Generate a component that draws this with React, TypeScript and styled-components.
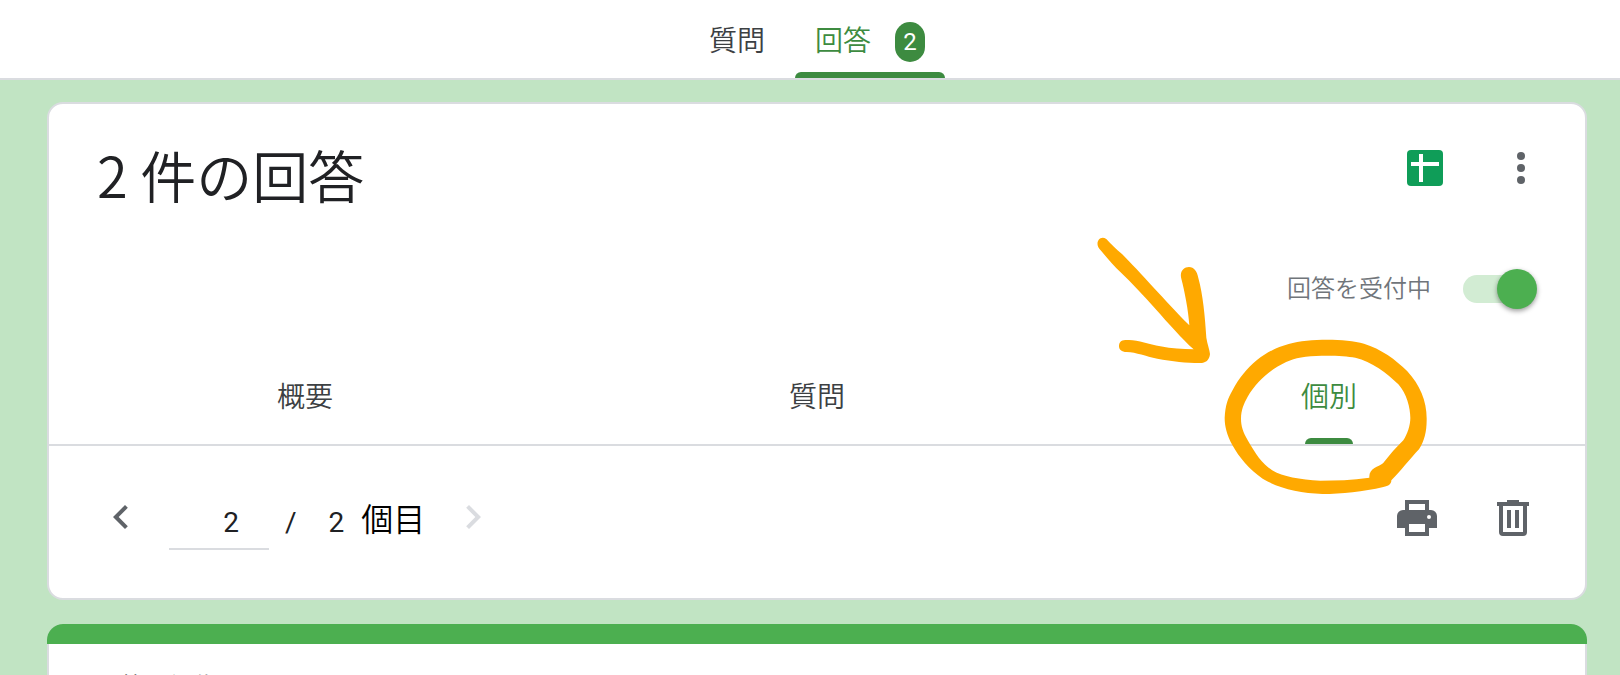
import React, { useState } from "react";
import styled, { createGlobalStyle } from "styled-components";

const GlobalStyle = createGlobalStyle`
  *, *::before, *::after { box-sizing: border-box; }
  body {
    margin: 0;
    background: #c1e4c3;
    color: #202124;
    font-family: Roboto, "Noto Sans CJK JP DemiLight", "Noto Sans CJK JP", sans-serif;
    font-size: 28px;
    font-weight: 350;
    line-height: 40px;
  }
  html { height: 100%; overflow: hidden; }
  button, input { font: inherit; color: inherit; }
  button { border: 0; padding: 0; background: none; cursor: pointer; }
`;

const TopBar = styled.header`
  display: flex;
  justify-content: center;
  gap: 10px;
  height: 80px;
  padding-left: 14px;
  background: #fff;
  border-bottom: 2px solid #dadce0;
`;

const TopTab = styled.button<{ $active?: boolean }>`
  display: flex;
  flex-direction: column;
  height: 78px;
  padding-top: 22px;
  color: ${(p) => (p.$active ? "#3d8b40" : "#3c4043")};
`;

const TopTabBody = styled.span`
  display: flex;
  align-items: center;
  gap: 24px;
  height: 50px;
  padding: 0 20px 10px;
`;

const Indicator = styled.span<{ $width: string }>`
  width: ${(p) => p.$width};
  height: 6px;
  flex: none;
  border-radius: 6px 6px 0 0;
  background: #3d8b40;
`;

const Badge = styled.span`
  width: 30px;
  height: 40px;
  border-radius: 15px;
  background: #3d8b40;
  color: #fff;
  font-size: 24px;
  font-weight: 400;
  text-align: center;
`;

const Main = styled.main`
  display: flex;
  flex-direction: column;
  gap: 24px;
  padding: 22px 33px 0 47px;
`;

const Card = styled.section`
  position: relative;
  border: 2px solid #dadce0;
  border-radius: 16px;
  background: #fff;
`;

const TitleRow = styled.div`
  display: flex;
  justify-content: space-between;
  height: 114px;
  padding: 30px 40px 0 48px;
`;

const Title = styled.h1`
  margin: 0;
  font-family: "Noto Sans CJK JP DemiLight", "Noto Sans CJK JP", sans-serif;
  font-size: 56px;
  font-weight: 350;
  line-height: 80px;
`;

const Actions = styled.div<{ $height: number }>`
  display: flex;
  align-items: center;
  gap: 48px;
  height: ${(p) => p.$height}px;
`;

const IconButton = styled.button`
  display: flex;
  width: 48px;
  height: 48px;
  svg { width: 48px; height: 48px; }
`;

const AcceptRow = styled.div`
  display: flex;
  justify-content: flex-end;
  padding: 51px 48px 0 0;
`;

const AcceptLabel = styled.label`
  display: flex;
  align-items: center;
  gap: 32px;
  height: 40px;
  color: #70757a;
  font-size: 24px;
`;

const Switch = styled.input`
  appearance: none;
  display: flex;
  align-items: center;
  width: 74px;
  height: 40px;
  margin: 0;
  &::before {
    content: "";
    width: 64px;
    height: 28px;
    flex: none;
    border-radius: 14px;
    background: #d2ecd3;
  }
  &::after {
    content: "";
    width: 40px;
    height: 40px;
    flex: none;
    margin-left: -30px;
    border-radius: 50%;
    background: #4caf50;
    box-shadow: 0 2px 5px rgba(0, 0, 0, 0.4);
  }
  &:not(:checked)::after { transform: translateX(-34px); }
`;

const Tabs = styled.div`
  display: grid;
  grid-template-columns: repeat(3, 1fr);
  margin-top: 67px;
  border-bottom: 2px solid #dadce0;
`;

const Tab = styled.button<{ $active?: boolean }>`
  display: flex;
  flex-direction: column;
  align-items: center;
  height: 68px;
  justify-content: space-between;
  color: ${(p) => (p.$active ? "#3d8b40" : "#3c4043")};
`;

const TabText = styled.span`
  padding-top: 2px;
`;

const PagerRow = styled.div`
  display: flex;
  justify-content: space-between;
  align-items: flex-start;
  height: 152px;
  padding: 42px 48px 0 48px;
`;

const Pager = styled.div`
  display: flex;
  align-items: center;
  height: 58px;
  font-weight: 400;
`;

const PageInput = styled.input`
  width: 100px;
  height: 66px;
  margin: 0 16px 0 24px;
  padding: 12px 30px 0 0;
  border: 0;
  border-bottom: 2px solid #dadce0;
  text-align: right;
  background: none;
  outline: none;
`;

const PagerText = styled.span`
  padding-top: 12px;
`;

const Total = styled(PagerText)`
  margin-left: 32px;
`;

const Unit = styled.span`
  margin: 0 24px 0 17px;
  padding-top: 6px;
  color: #000;
  font-size: 32px;
  font-weight: 350;
`;

const Annotation = styled.svg`
  position: absolute;
  top: 116px;
  right: 125px;
  width: 380px;
  height: 290px;
  pointer-events: none;
`;

const FormCard = styled.section`
  border: 2px solid #dadce0;
  border-top: 0;
  border-radius: 16px;
  background: #fff;
`;

const FormBar = styled.div`
  height: 20px;
  margin: 0 -2px;
  border-radius: 16px 16px 0 0;
  background: #4caf50;
`;

const Notice = styled.p`
  margin: 0;
  padding: 23px 48px;
  color: #3c4043;
  font-size: 24px;
`;

export default function App() {
  const [accepting, setAccepting] = useState(true);
  const [page, setPage] = useState("2");
  return (
    <>
      <GlobalStyle />
      <TopBar>
        <TopTab><TopTabBody>質問</TopTabBody></TopTab>
        <TopTab $active>
          <TopTabBody>回答<Badge>2</Badge></TopTabBody>
          <Indicator $width="100%" />
        </TopTab>
      </TopBar>
      <Main>
        <Card>
          <TitleRow>
            <Title>2 件の回答</Title>
            <Actions $height={68}>
              <IconButton aria-label="スプレッドシート">
                <svg viewBox="0 0 48 48">
                  <rect x="6" y="6" width="36" height="36" rx="4" fill="#0f9d58" />
                  <path d="M10 18h28v4H10zM18 10h4v28h-4z" fill="#fff" />
                </svg>
              </IconButton>
              <IconButton aria-label="その他">
                <svg viewBox="0 0 48 48" fill="#5f6368">
                  <circle cx="24" cy="12" r="4" />
                  <circle cx="24" cy="24" r="4" />
                  <circle cx="24" cy="36" r="4" />
                </svg>
              </IconButton>
            </Actions>
          </TitleRow>
          <AcceptRow>
            <AcceptLabel>
              回答を受付中
              <Switch type="checkbox" checked={accepting} onChange={(e) => setAccepting(e.target.checked)} />
            </AcceptLabel>
          </AcceptRow>
          <Tabs>
            <Tab><TabText>概要</TabText></Tab>
            <Tab><TabText>質問</TabText></Tab>
            <Tab $active><TabText>個別</TabText><Indicator $width="48px" /></Tab>
          </Tabs>
          <PagerRow>
            <Pager>
              <IconButton aria-label="前へ">
                <svg viewBox="0 0 24 24" fill="#5f6368"><path d="M15.41 7.41 14 6l-6 6 6 6 1.41-1.41L10.83 12z" /></svg>
              </IconButton>
              <PageInput aria-label="回答番号" value={page} onChange={(e) => setPage(e.target.value)} />
              <PagerText>/</PagerText>
              <Total>2</Total>
              <Unit>個目</Unit>
              <IconButton aria-label="次へ" disabled>
                <svg viewBox="0 0 24 24" fill="#dadce0"><path d="M10 6 8.59 7.41 13.17 12l-4.58 4.59L10 18l6-6z" /></svg>
              </IconButton>
            </Pager>
            <Actions $height={60}>
              <IconButton aria-label="印刷">
                <svg viewBox="0 0 24 24" fill="#5f6368">
                  <path fillRule="evenodd" d="M18 3v5h1a3 3 0 0 1 3 3v6h-4v4H6v-4H2v-6a3 3 0 0 1 3-3h1V3zM8 5v3h8V5zM8 15v4h8v-4zM18 10.500a1 1 0 1 0 0 2 1 1 0 0 0 0-2z" />
                </svg>
              </IconButton>
              <IconButton aria-label="削除">
                <svg viewBox="0 0 24 24" fill="#5f6368">
                  <path fillRule="evenodd" d="M15 4V3H9v1H4v2h1v13a2 2 0 0 0 2 2h10a2 2 0 0 0 2-2V6h1V4zM17 19H7V6h10zM9 8h2v9H9zM13 8h2v9h-2z" />
                </svg>
              </IconButton>
            </Actions>
          </PagerRow>
          <Annotation viewBox="0 0 1140 870" fill="#ffa900">
            <path d="M79 57C94 73 109 89 126 102C179 155 260 247 328 316C325 270 314 215 304 176C298 155 311 141 327 141C342 141 351 153 355 174C369 225 375 290 379 353C382 372 389 390 390 402C388 422 376 430 357 429C322 429 275 424 232 416C196 409 170 397 140 396C124 396 116 388 117 376C119 363 126 360 141 360C171 358 205 372 241 379C276 386 306 387 341 388C305 355 266 311 226 266C192 229 157 190 121 156C100 136 77 109 58 86C44 69 59 44 79 57Z" />
            <path fillRule="evenodd" d="M626 372C690 355 795 356 852 371C902 386 948 419 982 454C1020 495 1041 545 1040 600C1040 635 1033 664 1017 688C991 715 961 755 934 781C934 793 926 798 910 801C850 815 785 822 727 822C660 819 594 805 548 776C508 748 477 712 457 675C440 644 434 618 434 594C436 556 443 536 458 510C476 476 502 444 530 421C562 395 594 381 626 372ZM632 421C665 404 778 404 826 413C875 425 921 459 955 493C980 521 991 564 991 594C991 616 982 643 970 661C950 680 928 706 909 730C895 742 866 744 868 773C817 780 766 782 721 782C660 779 606 768 579 752C547 733 526 700 504 662C489 636 483 618 483 596C483 570 491 552 503 530C522 497 553 466 580 448C598 437 613 428 632 421Z" />
          </Annotation>
        </Card>
        <FormCard>
          <FormBar />
          <Notice>回答は編集できません</Notice>
        </FormCard>
      </Main>
    </>
  );
}
